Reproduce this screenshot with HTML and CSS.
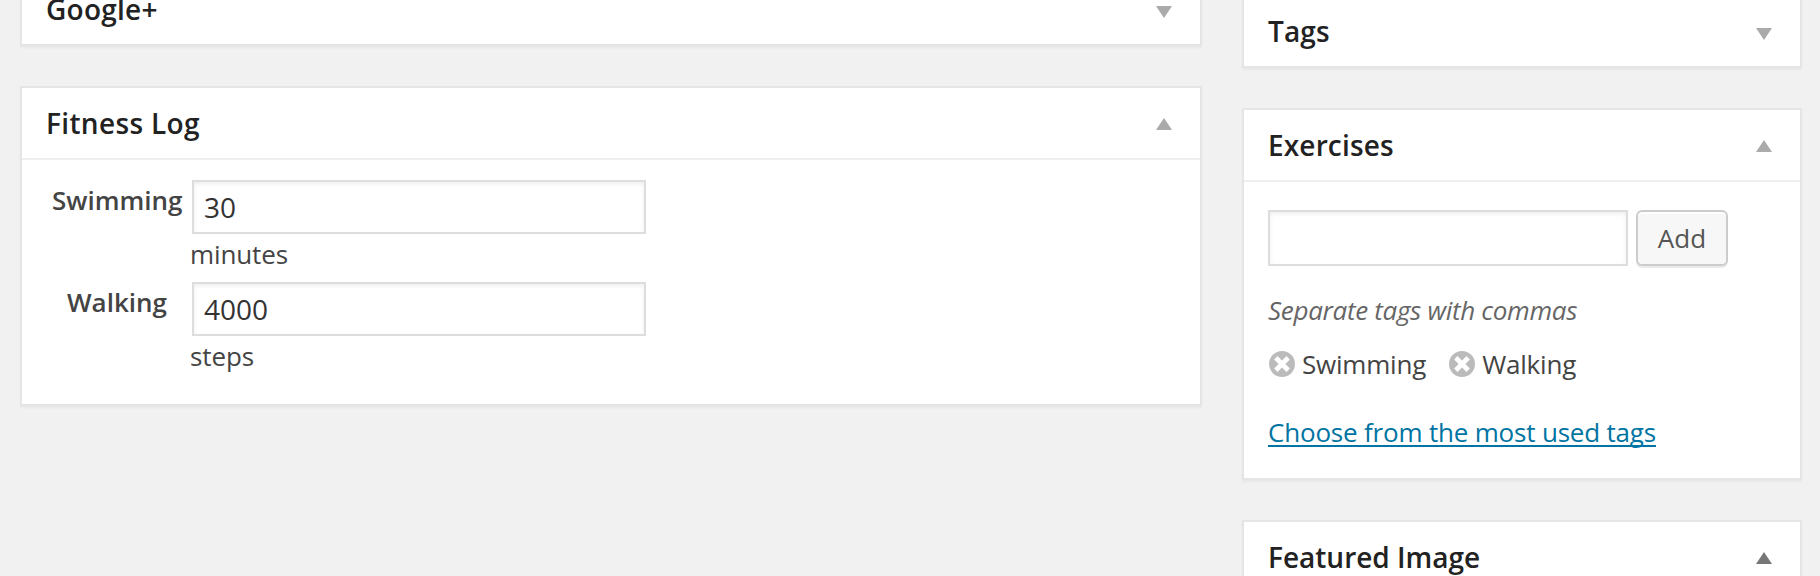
FILE: index.html
```html
<!DOCTYPE html>
<html lang="en">
<head>
<meta charset="utf-8">
<title>Edit Post</title>
<link rel="stylesheet" href="styles.css">
</head>
<body>
<div class="page">
  <main class="column main-column">
    <section class="postbox">
      <header class="box-header google"><h3>Google+</h3><span class="toggle closed"></span></header>
    </section>
    <section class="postbox">
      <header class="box-header divided fitness"><h3>Fitness Log</h3><span class="toggle"></span></header>
      <div class="log">
        <label class="log-label" for="swimming">Swimming</label>
        <div class="log-field"><input id="swimming" class="text-input" type="text" value="30"><span class="unit">minutes</span></div>
        <label class="log-label" for="walking">Walking</label>
        <div class="log-field"><input id="walking" class="text-input" type="text" value="4000"><span class="unit">steps</span></div>
      </div>
    </section>
  </main>
  <aside class="column side-column">
    <section class="postbox">
      <header class="box-header tags-title"><h3>Tags</h3><span class="toggle closed"></span></header>
    </section>
    <section class="postbox">
      <header class="box-header divided exercises-title"><h3>Exercises</h3><span class="toggle"></span></header>
      <div class="exercises">
        <div class="add-row"><input class="text-input tag-input" type="text" aria-label="Add exercise"><button class="button" type="button"><span>Add</span></button></div>
        <p class="hint"><span>Separate tags with commas</span></p>
        <div class="tag-list">
          <span class="tag"><svg class="remove" viewBox="0 0 26 26"><circle cx="13" cy="13" r="13"/><path d="M6.8 6.8l12.4 12.4M19.2 6.8L6.8 19.2"/></svg><span class="tag-name">Swimming</span></span>
          <span class="tag"><svg class="remove" viewBox="0 0 26 26"><circle cx="13" cy="13" r="13"/><path d="M6.8 6.8l12.4 12.4M19.2 6.8L6.8 19.2"/></svg><span class="tag-name">Walking</span></span>
        </div>
        <a class="cloud-link" href="#">Choose from the most used tags</a>
      </div>
    </section>
    <section class="postbox">
      <header class="box-header divided featured"><h3>Featured Image</h3><span class="toggle focused"></span></header>
    </section>
  </aside>
</div>
</body>
</html>
```
FILE: styles.css
```css
* { box-sizing: border-box; }
body {
  margin: 0;
  background: #f1f1f1;
  color: #444;
  font: 26px/36px "Open Sans", sans-serif;
}
.page {
  display: flex;
  gap: 40px;
  height: 576px;
  padding: 0 18px 0 20px;
  overflow: hidden;
}
.column { display: flex; flex-direction: column; gap: 40px; }
.column > * { flex: none; }
.main-column { width: 1182px; margin-top: -28px; }
.side-column { width: 560px; margin-top: -6px; }
.postbox {
  background: #fff;
  border: 2px solid #e5e5e5;
  box-shadow: 0 2px 2px rgba(0, 0, 0, .04);
}
.box-header {
  display: flex;
  align-items: center;
  justify-content: space-between;
  height: 70px;
  padding: 0 28px 0 24px;
}
.divided { height: 72px; border-bottom: 2px solid #eee; }
h3 {
  margin: 0;
  color: #222;
  font-size: 28px;
  font-weight: 600;
  line-height: 70px;
}
.google h3 { letter-spacing: .25px; }
.fitness h3 { letter-spacing: .35px; }
.tags-title h3 { letter-spacing: .15px; }
.exercises-title h3 { letter-spacing: .15px; }
.toggle {
  width: 16px;
  height: 12px;
  margin-top: 2px;
  background: #aaa;
  clip-path: polygon(50% 0, 100% 100%, 0 100%);
}
.closed { margin-top: 6px; clip-path: polygon(0 0, 100% 0, 50% 100%); }
.focused { background: #777; }
.log {
  display: grid;
  grid-template-columns: 130px 456px;
  column-gap: 8px;
  row-gap: 10px;
  padding: 20px 0 30px 30px;
}
.log-label { padding-top: 2px; font-weight: 600; text-align: center; white-space: nowrap; }
.log-field { display: flex; flex-direction: column; gap: 2px; }
.text-input {
  height: 54px;
  margin: 0 0 0 2px;
  padding: 0 10px;
  border: 2px solid #ddd;
  border-radius: 0;
  outline: 0;
  background: #fff;
  box-shadow: inset 0 2px 4px rgba(0, 0, 0, .07);
  color: #333;
  font: 28px "Open Sans", sans-serif;
}
.unit { letter-spacing: -.1px; }
.exercises { padding: 28px 24px 29px; }
.add-row { display: flex; gap: 8px; }
.tag-input { width: 360px; height: 56px; margin: 0; }
.button {
  width: 92px;
  height: 56px;
  padding: 0;
  border: 2px solid #ccc;
  border-radius: 6px;
  background: #f7f7f7;
  box-shadow: inset 0 2px 0 #fff, 0 2px 0 rgba(0, 0, 0, .08);
  color: #555;
  font: 26px/52px "Open Sans", sans-serif;
}
.hint { margin: 26px 0 18px; color: #666; font-style: italic; letter-spacing: -.31px; }
.tag-list { display: flex; gap: 22px; height: 36px; }
.tag { display: flex; align-items: center; gap: 7px; }
.tag-name { letter-spacing: -.2px; }
.remove { width: 26px; height: 26px; margin-left: 1px; fill: #bbb; }
.remove path { stroke: #fff; stroke-width: 4.8; }
.cloud-link {
  display: block;
  width: max-content;
  margin: 32px 0 -1px;
  color: #0074a2;
  letter-spacing: -.19px;
  text-decoration-thickness: 2px;
  text-underline-offset: 3px;
  text-decoration-skip-ink: none;
}
```
